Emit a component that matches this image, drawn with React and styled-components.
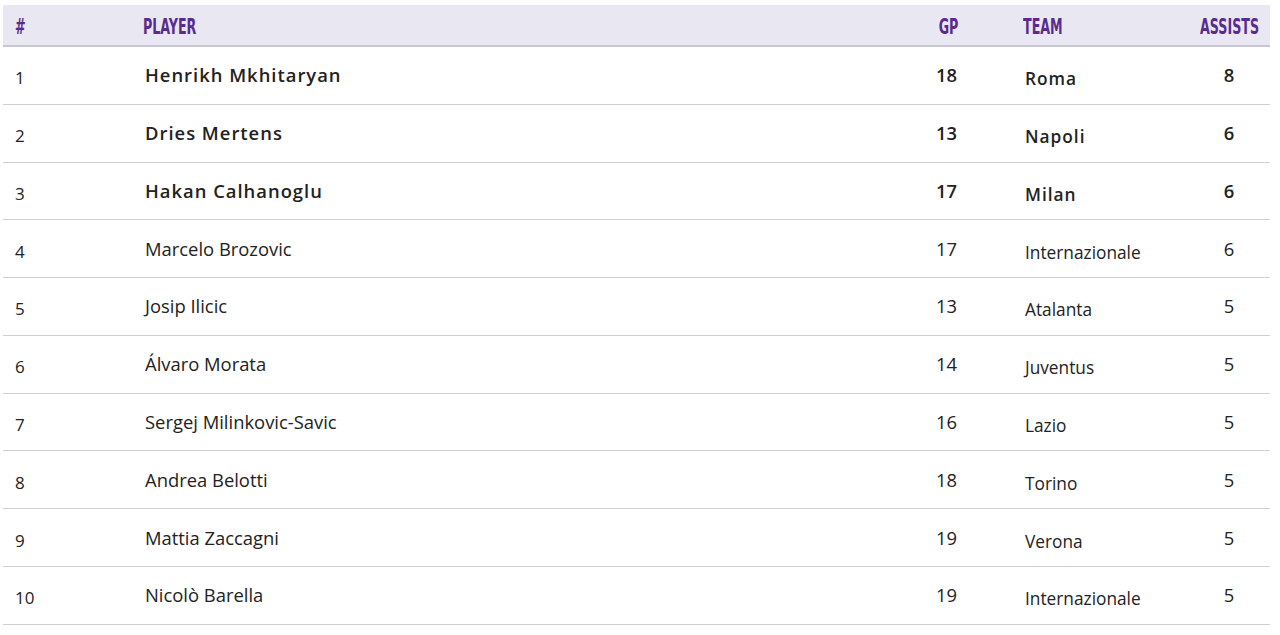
import React from "react";
import styled, { createGlobalStyle } from "styled-components";

const GlobalStyle = createGlobalStyle`
  body {
    margin: 0;
    background: #ffffff;
    font-family: "Open Sans", "Liberation Sans", sans-serif;
  }
`;

const players = [
  { rank: 1, name: "Henrikh Mkhitaryan", gp: 18, team: "Roma", assists: 8, top: true },
  { rank: 2, name: "Dries Mertens", gp: 13, team: "Napoli", assists: 6, top: true },
  { rank: 3, name: "Hakan Calhanoglu", gp: 17, team: "Milan", assists: 6, top: true },
  { rank: 4, name: "Marcelo Brozovic", gp: 17, team: "Internazionale", assists: 6 },
  { rank: 5, name: "Josip Ilicic", gp: 13, team: "Atalanta", assists: 5 },
  { rank: 6, name: "Álvaro Morata", gp: 14, team: "Juventus", assists: 5 },
  { rank: 7, name: "Sergej Milinkovic-Savic", gp: 16, team: "Lazio", assists: 5 },
  { rank: 8, name: "Andrea Belotti", gp: 18, team: "Torino", assists: 5 },
  { rank: 9, name: "Mattia Zaccagni", gp: 19, team: "Verona", assists: 5 },
  { rank: 10, name: "Nicolò Barella", gp: 19, team: "Internazionale", assists: 5 },
];

const cols = "128px 1fr 86px 219px 82px";

const Page = styled.div`
  padding: 5px 10px 0 3px;
`;

const Table = styled.div`
  width: 1267px;
`;

const HeadRow = styled.div`
  display: grid;
  grid-template-columns: ${cols};
  align-items: center;
  background: #e9e7f1;
  border-bottom: 2px solid #c9c6d3;
  box-sizing: border-box;
  height: 42px;
`;

const HeadCell = styled.div`
  display: flex;
  justify-content: ${(p) => (p.$right ? "flex-end" : "flex-start")};
  padding: 3px 12px 0;
  padding-left: ${(p) => (p.$indent ? `${p.$indent}px` : "12px")};
  padding-right: ${(p) => (p.$right ? "11px" : "12px")};
  min-width: 0;
`;

const HeadLabel = styled.span`
  display: inline-block;
  font-family: "Liberation Sans Narrow", "DejaVu Sans Condensed", sans-serif;
  font-size: 21px;
  font-weight: 700;
  color: #5a2b8f;
  white-space: nowrap;
  transform: scaleX(0.67);
  transform-origin: ${(p) => (p.$right ? "right" : "left")} center;
`;

const Row = styled.div`
  display: grid;
  grid-template-columns: ${cols};
  height: 57.78px;
  align-items: center;
  border-bottom: 1px solid #cfcdd6;
  box-sizing: border-box;
  color: #222222;
  font-size: 18.4px;
`;

const Cell = styled.div`
  padding: 0 12px 0 14px;
  text-align: ${(p) => p.$align || "left"};
  ${(p) => p.$align === "center" && "padding-left: 0; padding-right: 0;"}
  font-weight: ${(p) => (p.$bold ? 600 : 400)};
  letter-spacing: ${(p) => (p.$spaced ? "1px" : "0")};
  white-space: nowrap;
  padding-bottom: 1px;
`;

const Rank = styled(Cell)`
  font-size: 17px;
  padding-left: 12px;
  padding-top: 6px;
`;

const Team = styled(Cell)`
  font-size: 17.3px;
  padding-left: 56px;
  padding-top: 8px;
`;

export default function App() {
  return (
    <Page>
      <GlobalStyle />
      <Table>
        <HeadRow>
          <HeadCell>
            <HeadLabel>#</HeadLabel>
          </HeadCell>
          <HeadCell>
            <HeadLabel>PLAYER</HeadLabel>
          </HeadCell>
          <HeadCell $right>
            <HeadLabel $right>GP</HeadLabel>
          </HeadCell>
          <HeadCell $indent={54}>
            <HeadLabel>TEAM</HeadLabel>
          </HeadCell>
          <HeadCell $right>
            <HeadLabel $right>ASSISTS</HeadLabel>
          </HeadCell>
        </HeadRow>
        {players.map((p) => (
          <Row key={p.rank}>
            <Rank>{p.rank}</Rank>
            <Cell $bold={p.top} $spaced={p.top}>
              {p.name}
            </Cell>
            <Cell $align="right" $bold={p.top}>
              {p.gp}
            </Cell>
            <Team $bold={p.top} $spaced={p.top}>
              {p.team}
            </Team>
            <Cell $align="center" $bold={p.top}>
              {p.assists}
            </Cell>
          </Row>
        ))}
      </Table>
    </Page>
  );
}
